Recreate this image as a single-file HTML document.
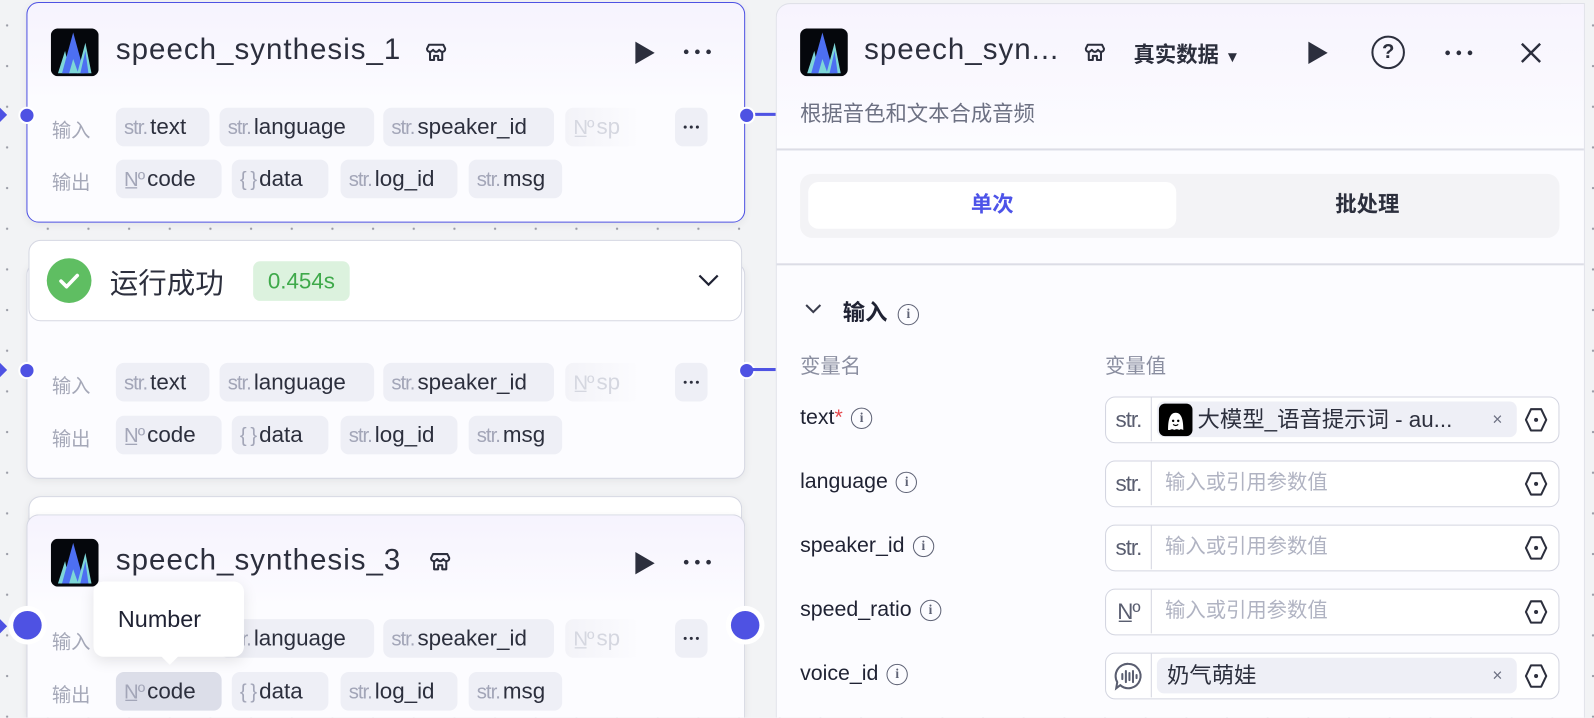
<!DOCTYPE html>
<html><head><meta charset="utf-8">
<style>
*{box-sizing:border-box;margin:0;padding:0}
html,body{width:1594px;height:718px;overflow:hidden;background:#f2f3f5;position:relative}
body{font-family:"Liberation Sans","Noto Sans CJK SC",sans-serif;color:#1f2233}
#o{position:absolute;left:0;top:0;width:1594px;height:718px;overflow:hidden}
#w{position:absolute;left:0;top:0;width:1568px;height:706px;overflow:hidden;transform:scale(1.0166);transform-origin:0 0;
background-image:radial-gradient(circle,#9a9ca6 1px,transparent 1.3px);background-size:40px 40px;background-position:-13px 5px}
.abs{position:absolute}
.node{position:absolute;left:26px;width:707px;border-radius:12px;border:1.5px solid #d5d7e2;background:linear-gradient(#f6f3fe,#fcfcff 45%);box-shadow:0 2px 8px rgba(0,0,0,.06)}
.logo{position:absolute;width:47px;height:47px}
.title{position:absolute;font-size:29px;letter-spacing:1px;color:#2c2f3d;white-space:nowrap}
.lbl{position:absolute;font-size:19px;color:#a5a8b8}
.chip{position:absolute;height:38px;border-radius:8px;background:#eeeff6;font-size:22px;line-height:38px;padding:0 8px;white-space:nowrap;color:#2c2f3d}
.chip i{font-style:normal;color:#a3a6b8;font-size:20px;margin-right:3px;letter-spacing:-1px}
.port{position:absolute;width:13px;height:13px;border-radius:50%;background:#4e52e3;border:2px solid #fff;box-sizing:content-box}
.ibox{position:absolute;left:1087px;width:447px;height:46px;border:1.5px solid #d3d5e0;border-radius:10px;background:#fff}
.ibox .t{position:absolute;left:0;top:0;width:45px;height:43px;border-right:1.5px solid #d3d5e0;font-size:22px;line-height:43px;text-align:center;color:#5a5e70;letter-spacing:-1px}
.ibox .ph{position:absolute;left:58px;top:0;line-height:43px;font-size:20px;color:#b0b3c2}
.ibox svg.h{position:absolute;right:10px;top:10px}
.vn{position:absolute;left:787px;font-size:21px;color:#1f2233}
.info{display:inline-block;width:21px;height:21px;border:1.8px solid #5e6275;border-radius:50%;font-size:13px;line-height:18px;text-align:center;color:#5e6275;vertical-align:middle;margin-left:8px;font-family:"Liberation Serif",serif;font-weight:bold}
</style></head><body><div id="o"><div id="w">

<svg width="0" height="0" style="position:absolute"><defs>
<g id="lg"><rect width="47" height="47" rx="7" fill="#05070c"/><path d="M7 44 L14 22 L19 44Z" fill="#7dd6d8"/><path d="M11 44 L22 4 L33 44Z" fill="#4d6ff2"/><path d="M18 44 L22 30 L27 44Z" fill="#7dd6d8"/><path d="M26 44 L34 14 L40 44Z" fill="#7dd6d8"/><path d="M29 44 L34 22 L37 44Z" fill="#4d6ff2"/></g>
<g id="st"><path d="M3 2h14l2 4c0 2-1.5 3-3 3s-2-1-3-2c-.7 1-2 2-3 2s-2.3-1-3-2c-1 1-1.5 2-3 2S1 8 1 6Z M4 9v8h4v-4h4v4h4V9" fill="none" stroke="#2c2f3d" stroke-width="2" stroke-linejoin="round"/></g>
<g id="hx"><path d="M7 1.5h10l5 10.5-5 10.5H7L2 12Z" fill="none" stroke="#2c2f3d" stroke-width="2" stroke-linejoin="round"/><circle cx="12" cy="12" r="2" fill="#2c2f3d"/></g>
<g id="dt"><circle cx="3" cy="3" r="2.3" fill="#2c2f3d"/><circle cx="14" cy="3" r="2.3" fill="#2c2f3d"/><circle cx="25" cy="3" r="2.3" fill="#2c2f3d"/></g>
<g id="sd"><circle cx="3" cy="2" r="1.5" fill="#2c2f3d"/><circle cx="9" cy="2" r="1.5" fill="#2c2f3d"/><circle cx="15" cy="2" r="1.5" fill="#2c2f3d"/></g>
</defs></svg>

<div class="abs" style="left:740px;top:111px;width:23px;height:3px;background:#4e52e3"></div>
<div class="abs" style="left:0;top:106px;width:0;height:0;border-left:7px solid #4e52e3;border-top:7px solid transparent;border-bottom:7px solid transparent"></div>
<div class="abs" style="left:0;top:357px;width:0;height:0;border-left:7px solid #4e52e3;border-top:7px solid transparent;border-bottom:7px solid transparent"></div>
<div class="abs" style="left:0;top:609px;width:0;height:0;border-left:7px solid #4e52e3;border-top:7px solid transparent;border-bottom:7px solid transparent"></div>

<!-- node 2 -->
<div class="node" style="top:258px;height:213px;background:#fcfcff"></div>
<div class="lbl" style="left:51px;top:365px">输入</div>
<div class="chip" style="left:114px;top:357px;width:92px"><i>str.</i>text</div>
<div class="chip" style="left:216px;top:357px;width:152px"><i>str.</i>language</div>
<div class="chip" style="left:377px;top:357px;width:168px"><i>str.</i>speaker_id</div>
<div class="chip" style="left:556px;top:357px;width:74px;background:linear-gradient(90deg,#f3f3f8,#fcfcff);color:#d5d7e0"><i style="color:#d5d7e0">N̲º</i>sp</div>
<div class="chip" style="left:664px;top:357px;width:32px;padding:0"><svg style="position:absolute;left:7px;top:17px" width="18" height="4"><use href="#sd"/></svg></div>
<div class="lbl" style="left:51px;top:417px">输出</div>
<div class="chip" style="left:114px;top:409px;width:104px"><i>N̲º</i>code</div>
<div class="chip" style="left:228px;top:409px;width:95px"><i>{ }</i>data</div>
<div class="chip" style="left:335px;top:409px;width:115px"><i>str.</i>log_id</div>
<div class="chip" style="left:461px;top:409px;width:92px"><i>str.</i>msg</div>
<div class="port" style="left:18px;top:356px"></div>
<div class="port" style="left:726px;top:356px"></div>
<div class="abs" style="left:740px;top:362px;width:23px;height:3px;background:#4e52e3"></div>

<!-- success bar -->
<div class="abs" style="left:28px;top:236px;width:702px;height:80px;background:#fff;border:1.5px solid #d5d7e2;border-radius:12px"></div>
<div class="abs" style="left:46px;top:254px;width:44px;height:44px;border-radius:50%;background:#5fbe62"><svg width="44" height="44"><path d="M14 22.5l5.5 5.5 10.5-11" fill="none" stroke="#fff" stroke-width="3.5" stroke-linecap="round" stroke-linejoin="round"/></svg></div>
<div class="abs" style="left:108px;top:257px;font-size:28px;color:#2c2f3d">运行成功</div>
<div class="abs" style="left:249px;top:257px;width:95px;height:39px;border-radius:7px;background:#dcf2de;color:#3ea94a;font-size:22px;line-height:39px;text-align:center">0.454s</div>
<svg class="abs" style="left:686px;top:268px" width="22" height="16"><path d="M2 3l9 9 9-9" fill="none" stroke="#1f2233" stroke-width="2.2"/></svg>

<!-- node 1 -->
<div class="node" style="top:2px;height:217px;border:1.5px solid #4e52e3"></div>
<svg class="logo" style="left:50px;top:28px"><use href="#lg"/></svg>
<div class="title" style="left:114px;top:33px">speech_synthesis_1</div>
<svg class="abs" style="left:419px;top:42px" width="20" height="20"><use href="#st"/></svg>
<svg class="abs" style="left:623px;top:40px" width="22" height="24"><path d="M2 1l19 11-19 11Z" fill="#2c2f3d"/></svg>
<svg class="abs" style="left:672px;top:48px" width="30" height="6"><use href="#dt"/></svg>
<div class="lbl" style="left:51px;top:114px">输入</div>
<div class="chip" style="left:114px;top:106px;width:92px"><i>str.</i>text</div>
<div class="chip" style="left:216px;top:106px;width:152px"><i>str.</i>language</div>
<div class="chip" style="left:377px;top:106px;width:168px"><i>str.</i>speaker_id</div>
<div class="chip" style="left:556px;top:106px;width:74px;background:linear-gradient(90deg,#f3f3f8,#fcfcff);color:#d5d7e0"><i style="color:#d5d7e0">N̲º</i>sp</div>
<div class="chip" style="left:664px;top:106px;width:32px;padding:0"><svg style="position:absolute;left:7px;top:17px" width="18" height="4"><use href="#sd"/></svg></div>
<div class="lbl" style="left:51px;top:165px">输出</div>
<div class="chip" style="left:114px;top:157px;width:104px"><i>N̲º</i>code</div>
<div class="chip" style="left:228px;top:157px;width:95px"><i>{ }</i>data</div>
<div class="chip" style="left:335px;top:157px;width:115px"><i>str.</i>log_id</div>
<div class="chip" style="left:461px;top:157px;width:92px"><i>str.</i>msg</div>
<div class="port" style="left:18px;top:105px"></div>
<div class="port" style="left:726px;top:105px"></div>

<!-- node 3 stack -->
<div class="node" style="top:488px;height:218px;left:28px;width:702px;background:#fff;border-bottom:none;border-radius:12px 12px 0 0"></div>
<div class="node" style="top:506px;height:200px;border-bottom:none;border-radius:12px 12px 0 0"></div>
<svg class="logo" style="left:50px;top:530px"><use href="#lg"/></svg>
<div class="title" style="left:114px;top:535px">speech_synthesis_3</div>
<svg class="abs" style="left:423px;top:543px" width="20" height="20"><use href="#st"/></svg>
<svg class="abs" style="left:623px;top:542px" width="22" height="24"><path d="M2 1l19 11-19 11Z" fill="#2c2f3d"/></svg>
<svg class="abs" style="left:672px;top:550px" width="30" height="6"><use href="#dt"/></svg>
<div class="lbl" style="left:51px;top:617px">输入</div>
<div class="chip" style="left:216px;top:609px;width:152px"><i>str.</i>language</div>
<div class="chip" style="left:377px;top:609px;width:168px"><i>str.</i>speaker_id</div>
<div class="chip" style="left:556px;top:609px;width:74px;background:linear-gradient(90deg,#f3f3f8,#fcfcff);color:#d5d7e0"><i style="color:#d5d7e0">N̲º</i>sp</div>
<div class="chip" style="left:664px;top:609px;width:32px;padding:0"><svg style="position:absolute;left:7px;top:17px" width="18" height="4"><use href="#sd"/></svg></div>
<div class="lbl" style="left:51px;top:669px">输出</div>
<div class="chip" style="left:114px;top:661px;width:104px;background:#dcdee9"><i>N̲º</i>code</div>
<div class="chip" style="left:228px;top:661px;width:95px"><i>{ }</i>data</div>
<div class="chip" style="left:335px;top:661px;width:115px"><i>str.</i>log_id</div>
<div class="chip" style="left:461px;top:661px;width:92px"><i>str.</i>msg</div>
<div class="abs" style="left:8px;top:596px;width:38px;height:38px;border-radius:50%;background:#fff"></div>
<div class="abs" style="left:13px;top:601px;width:28px;height:28px;border-radius:50%;background:#4e52e3"></div>
<div class="abs" style="left:714px;top:596px;width:38px;height:38px;border-radius:50%;background:#fff"></div>
<div class="abs" style="left:719px;top:601px;width:28px;height:28px;border-radius:50%;background:#4e52e3"></div>
<div class="abs" style="left:92px;top:572px;width:148px;height:74px;background:#fff;border-radius:10px;box-shadow:0 4px 14px rgba(0,0,0,.1);font-size:23px;line-height:74px;padding-left:24px;color:#1f2233">Number</div>
<div class="abs" style="left:157px;top:644px;width:0;height:0;border-left:10px solid transparent;border-right:10px solid transparent;border-top:10px solid #fff"></div>

<!-- right panel -->
<div class="abs" style="left:763px;top:3px;width:796px;height:703px;border:1.5px solid #dfe0e8;border-bottom:none;border-radius:14px 0 0 0;background:linear-gradient(#f7f4fe,#fcfcff 140px)"></div>
<svg class="logo" style="left:787px;top:28px"><use href="#lg"/></svg>
<div class="title" style="left:850px;top:33px">speech_syn...</div>
<svg class="abs" style="left:1067px;top:42px" width="20" height="20"><use href="#st"/></svg>
<div class="abs" style="left:1115px;top:38px;font-size:21px;font-weight:bold;color:#2c2f3d">真实数据 <span style="font-size:15px">▼</span></div>
<svg class="abs" style="left:1285px;top:40px" width="22" height="24"><path d="M2 1l19 11-19 11Z" fill="#2c2f3d"/></svg>
<div class="abs" style="left:1349px;top:35px;width:33px;height:33px;border:2.2px solid #2c2f3d;border-radius:50%;text-align:center;font-size:20px;line-height:29px;font-weight:bold;color:#2c2f3d">?</div>
<svg class="abs" style="left:1421px;top:49px" width="30" height="6"><use href="#dt"/></svg>
<svg class="abs" style="left:1494px;top:40px" width="24" height="24"><path d="M3 3l18 18M21 3L3 21" stroke="#2c2f3d" stroke-width="2.4"/></svg>
<div class="abs" style="left:787px;top:96px;font-size:21px;color:#6d7183">根据音色和文本合成音频</div>
<div class="abs" style="left:764px;top:146px;width:794px;height:2px;background:#dcdde6"></div>
<div class="abs" style="left:787px;top:171px;width:747px;height:63px;border-radius:12px;background:#f3f3f6"></div>
<div class="abs" style="left:795px;top:179px;width:362px;height:46px;border-radius:10px;background:#fff;text-align:center;line-height:46px;font-size:21px;font-weight:bold;color:#4d53e8">单次</div>
<div class="abs" style="left:1165px;top:179px;width:360px;height:46px;text-align:center;line-height:46px;font-size:21px;font-weight:bold;color:#2c2f3d">批处理</div>
<div class="abs" style="left:764px;top:259px;width:794px;height:2px;background:#dcdde6"></div>
<svg class="abs" style="left:791px;top:297px" width="18" height="14"><path d="M2 3l7 7 7-7" fill="none" stroke="#3a3d4d" stroke-width="2"/></svg>
<div class="abs" style="left:829px;top:290px;font-size:22px;font-weight:bold;color:#1f2233">输入<span class="info" style="margin-left:10px">i</span></div>
<div class="abs" style="left:787px;top:344px;font-size:20px;color:#8a8ea0">变量名</div>
<div class="abs" style="left:1087px;top:344px;font-size:20px;color:#8a8ea0">变量值</div>

<div class="vn" style="top:399px">text<span style="color:#e5484d">*</span><span class="info">i</span></div>
<div class="ibox" style="top:390px"><div class="t">str.</div>
<div class="abs" style="left:50px;top:4px;width:354px;height:35px;border-radius:7px;background:#eeeff6"></div>
<div class="abs" style="left:52px;top:6px;width:33px;height:32px;border-radius:6px;background:#000"><svg width="33" height="32"><path d="M9 26c0-8 1-17 7.5-17S24 18 24 26c-2-1-3-1-4 0-1.5-1-3.5-1-5 0-1-1-3-1-4 0z" fill="#fff"/><circle cx="14" cy="17" r="1.2" fill="#000"/><circle cx="19" cy="17" r="1.2" fill="#000"/><path d="M14 20.5q2.5 2 5 0" stroke="#000" fill="none" stroke-width="1.2"/></svg></div>
<div class="abs" style="left:90px;top:0;line-height:43px;font-size:22px;color:#2c2f3d;white-space:nowrap">大模型_语音提示词 - au...</div>
<div class="abs" style="left:380px;top:0;line-height:43px;font-size:17px;color:#6d7183">×</div>
<svg class="h" width="24" height="24"><use href="#hx"/></svg></div>

<div class="vn" style="top:462px">language<span class="info">i</span></div>
<div class="ibox" style="top:453px"><div class="t">str.</div><div class="ph">输入或引用参数值</div><svg class="h" width="24" height="24"><use href="#hx"/></svg></div>

<div class="vn" style="top:525px">speaker_id<span class="info">i</span></div>
<div class="ibox" style="top:516px"><div class="t">str.</div><div class="ph">输入或引用参数值</div><svg class="h" width="24" height="24"><use href="#hx"/></svg></div>

<div class="vn" style="top:588px">speed_ratio<span class="info">i</span></div>
<div class="ibox" style="top:579px"><div class="t">N̲º</div><div class="ph">输入或引用参数值</div><svg class="h" width="24" height="24"><use href="#hx"/></svg></div>

<div class="vn" style="top:651px">voice_id<span class="info">i</span></div>
<div class="ibox" style="top:642px"><div class="t"><svg width="30" height="30" style="margin-top:7px"><path d="M15 3a12 12 0 1 1-8 21l-4 3 1-6A12 12 0 0 1 15 3z" fill="none" stroke="#5a5e70" stroke-width="2"/><path d="M9 13v5M12.5 10v11M16 12v7M19.5 10v11M23 14v3" stroke="#5a5e70" stroke-width="2" stroke-linecap="round"/></svg></div>
<div class="abs" style="left:50px;top:4px;width:354px;height:35px;border-radius:7px;background:#eeeff6"></div>
<div class="abs" style="left:60px;top:0;line-height:43px;font-size:22px;color:#2c2f3d">奶气萌娃</div>
<div class="abs" style="left:380px;top:0;line-height:43px;font-size:17px;color:#6d7183">×</div>
<svg class="h" width="24" height="24"><use href="#hx"/></svg></div>

</div></div></body></html>
